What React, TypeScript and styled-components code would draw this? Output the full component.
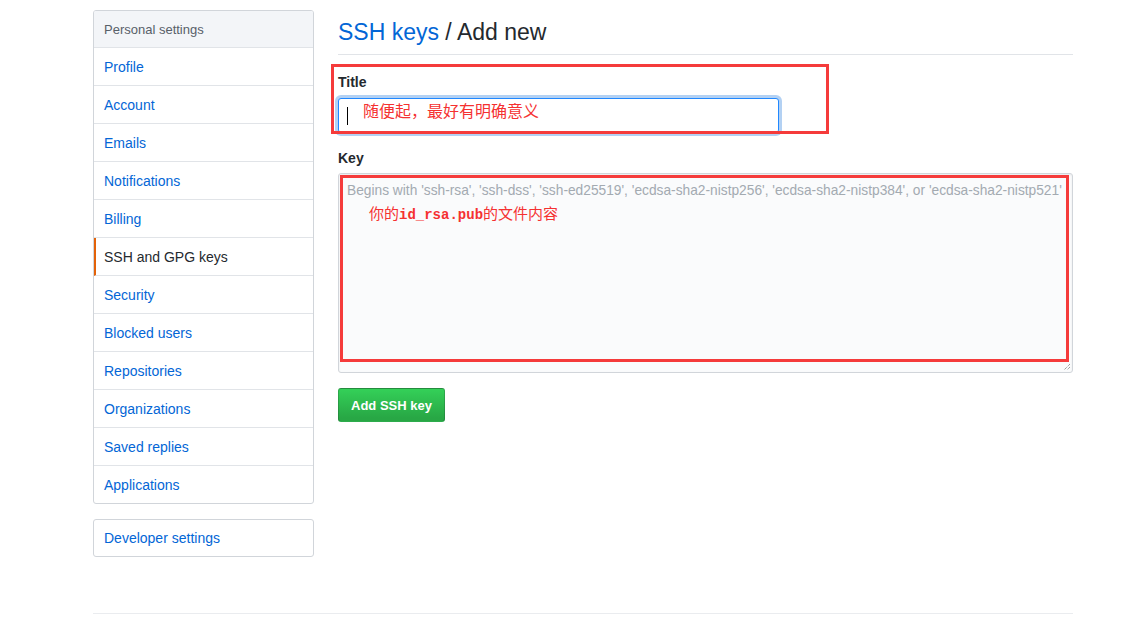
import React from "react";
import styled, { createGlobalStyle } from "styled-components";

const Global = createGlobalStyle`
  html, body { margin: 0; padding: 0; background: #fff; }
  body { font-family: "Liberation Sans", Arial, sans-serif; color: #24292e; }
  * { box-sizing: border-box; }
`;

const Page = styled.div`
  width: 980px;
  margin-left: 93px;
  padding-top: 10px;
`;

const Columns = styled.div`
  display: flex;
  gap: 24px;
  align-items: flex-start;
`;

const Sidebar = styled.nav`
  width: 221px;
  flex: none;
  display: flex;
  flex-direction: column;
  gap: 15px;
`;

const Menu = styled.div`
  border: 1px solid #d1d5da;
  border-radius: 3px;
  overflow: hidden;
`;

const MenuHeader = styled.div`
  height: 37px;
  display: flex;
  align-items: center;
  padding-left: 10px;
  background: #f3f5f8;
  color: #586069;
  font-size: 13px;
  border-bottom: 1px solid #e1e4e8;
`;

const MenuItem = styled.a<{ $active?: boolean; $last?: boolean }>`
  height: ${(p) => (p.$last ? "37px" : "38px")};
  display: flex;
  align-items: center;
  padding-left: ${(p) => (p.$active ? "8px" : "10px")};
  font-size: 14px;
  color: ${(p) => (p.$active ? "#24292e" : "#0366d6")};
  border-bottom: ${(p) => (p.$last ? "none" : "1px solid #e1e4e8")};
  border-left: ${(p) => (p.$active ? "2px solid #e36209" : "none")};
  text-decoration: none;
`;

const DevItem = styled(MenuItem)`
  height: 36px;
`;

const Main = styled.main`
  flex: 1;
  display: flex;
  flex-direction: column;
`;

const Heading = styled.h2`
  margin: 0;
  height: 45px;
  display: flex;
  align-items: center;
  font-size: 23px;
  font-weight: normal;
  color: #24292e;
  border-bottom: 1px solid #e1e4e8;
`;

const Crumb = styled.span`
  color: #0366d6;
`;

const Field = styled.div<{ $gap: number }>`
  position: relative;
  display: flex;
  flex-direction: column;
  align-items: flex-start;
  margin-top: ${(p) => p.$gap}px;
`;

const Label = styled.label<{ $below?: number }>`
  font-size: 14px;
  font-weight: bold;
  color: #24292e;
  line-height: 20px;
  margin-bottom: ${(p) => p.$below ?? 6}px;
`;

const TitleInput = styled.div`
  width: 441px;
  height: 35px;
  border: 1px solid #2188ff;
  border-radius: 3px;
  box-shadow: 0 0 0 3px rgba(3, 102, 214, 0.3);
  display: flex;
  align-items: center;
  padding-left: 8px;
  background: #fff;
`;

const Caret = styled.span`
  width: 1px;
  height: 18px;
  background: #000;
  margin-right: 15px;
`;

const Note = styled.span<{ $size?: number; $lift?: number }>`
  color: #f53131;
  font-family: "Noto Sans CJK SC", sans-serif;
  font-size: ${(p) => p.$size ?? 15}px;
  margin-bottom: ${(p) => p.$lift ?? 0}px;
`;

const Mono = styled.span`
  font-family: "Liberation Mono", monospace;
  font-weight: bold;
  font-size: 14px;
`;

const TextArea = styled.div`
  position: relative;
  width: 735px;
  height: 200px;
  border: 1px solid #d1d5da;
  border-radius: 3px;
  background: #fafbfc;
  box-shadow: inset 0 1px 2px rgba(27, 31, 35, 0.075);
  padding: 8px 8px;
`;

const Placeholder = styled.div`
  font-size: 13.75px;
  color: #a3aab1;
  white-space: nowrap;
  line-height: 18px;
`;

const KeyNote = styled.div`
  padding-left: 22px;
  margin-top: 2px;
`;

const Grip = styled.svg`
  position: absolute;
  right: 1px;
  bottom: 1px;
`;

const Annotation = styled.div<{ $l: number; $t: number; $w: number; $h: number }>`
  position: absolute;
  left: ${(p) => p.$l}px;
  top: ${(p) => p.$t}px;
  width: ${(p) => p.$w}px;
  height: ${(p) => p.$h}px;
  border: 3px solid #f53b3b;
  pointer-events: none;
`;

const Button = styled.button`
  margin-top: 15px;
  height: 34px;
  padding: 0 12px;
  border: 1px solid rgba(27, 31, 35, 0.2);
  border-radius: 3px;
  background: linear-gradient(#34d058, #28a745 90%);
  color: #fff;
  font-family: "Liberation Sans", Arial, sans-serif;
  font-weight: bold;
  font-size: 13px;
`;

const Footer = styled.div`
  margin-top: 56px;
  border-top: 1px solid #eaecef;
  height: 14px;
`;

const items = [
  "Profile",
  "Account",
  "Emails",
  "Notifications",
  "Billing",
  "SSH and GPG keys",
  "Security",
  "Blocked users",
  "Repositories",
  "Organizations",
  "Saved replies",
  "Applications",
];

export default function App() {
  return (
    <>
      <Global />
      <Page>
        <Columns>
          <Sidebar>
            <Menu>
              <MenuHeader>Personal settings</MenuHeader>
              {items.map((it, i) => (
                <MenuItem
                  key={it}
                  $active={it === "SSH and GPG keys"}
                  $last={i === items.length - 1}
                >
                  {it}
                </MenuItem>
              ))}
            </Menu>
            <Menu>
              <DevItem $last>Developer settings</DevItem>
            </Menu>
          </Sidebar>
          <Main>
            <Heading>
              <Crumb>SSH keys</Crumb>&nbsp;/ Add new
            </Heading>
            <Field $gap={17}>
              <Label>Title</Label>
              <TitleInput>
                <Caret />
                <Note $size={16} $lift={12}>随便起，最好有明确意义</Note>
              </TitleInput>
              <Annotation $l={-7} $t={-8} $w={498} $h={70} />
            </Field>
            <Field $gap={15}>
              <Label $below={5}>Key</Label>
              <TextArea>
                <Placeholder>
                  Begins with 'ssh-rsa', 'ssh-dss', 'ssh-ed25519', 'ecdsa-sha2-nistp256',
                  'ecdsa-sha2-nistp384', or 'ecdsa-sha2-nistp521'
                </Placeholder>
                <KeyNote>
                  <Note>
                    你的<Mono>id_rsa.pub</Mono>的文件内容
                  </Note>
                </KeyNote>
                <Grip width="10" height="10" viewBox="0 0 10 10">
                  <path d="M9 3L3 9M9 6L6 9" stroke="#777" strokeWidth="1" strokeDasharray="1 1" />
                </Grip>
                <Annotation $l={1} $t={1} $w={729} $h={187} />
              </TextArea>
            </Field>
            <div>
              <Button>Add SSH key</Button>
            </div>
          </Main>
        </Columns>
        <Footer />
      </Page>
    </>
  );
}
